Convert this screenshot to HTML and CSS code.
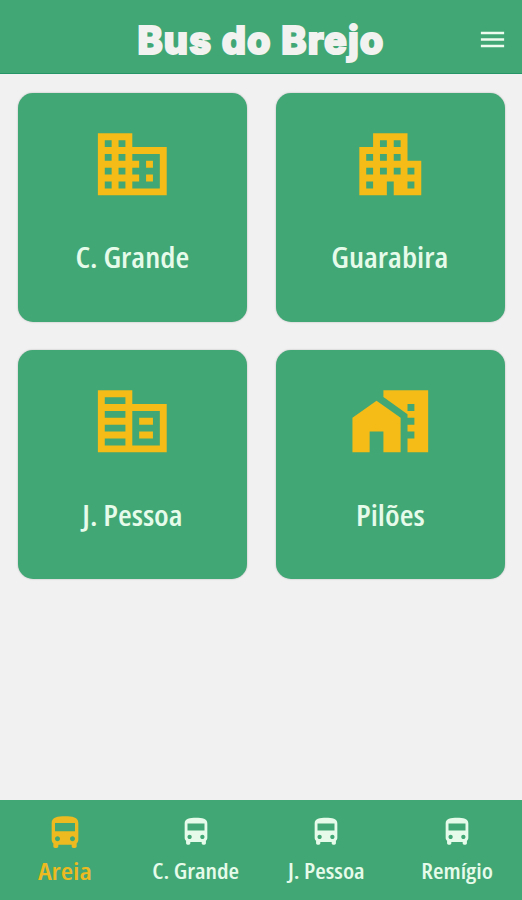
FILE: index.html
```
<!DOCTYPE html>
<html lang="pt-BR">
<head>
    <meta charset="UTF-8">
    <meta name="viewport" content="width=device-width, initial-scale=1.0">
    <title>Bus do Brejo</title>
    <link rel="stylesheet" href="styles.css">
</head>
<body>
    <header class="header">
        <h1 class="title">Bus do Brejo</h1>
        <button class="menu-btn" aria-label="Menu">
            <svg viewBox="0 0 24 24"><path d="M3 18h18v-2H3v2zm0-5h18v-2H3v2zm0-7v2h18V6H3z"/></svg>
        </button>
    </header>

    <main class="cards">
        <a class="card">
            <svg viewBox="0 0 24 24"><path d="M12 7V3H2v18h20V7H12zM6 19H4v-2h2v2zm0-4H4v-2h2v2zm0-4H4V9h2v2zm0-4H4V5h2v2zm4 12H8v-2h2v2zm0-4H8v-2h2v2zm0-4H8V9h2v2zm0-4H8V5h2v2zm10 12h-8v-2h2v-2h-2v-2h2v-2h-2V9h8v10zm-2-8h-2v2h2v-2zm0 4h-2v2h2v-2z"/></svg>
            <span class="label">C. Grande</span>
        </a>
        <a class="card">
            <svg viewBox="0 0 24 24"><path d="M17 11V3H7v4H3v14h8v-4h2v4h8V11h-4zM7 19H5v-2h2v2zm0-4H5v-2h2v2zm0-4H5V9h2v2zm4 4H9v-2h2v2zm0-4H9V9h2v2zm0-4H9V5h2v2zm4 8h-2v-2h2v2zm0-4h-2V9h2v2zm0-4h-2V5h2v2zm4 12h-2v-2h2v2zm0-4h-2v-2h2v2z"/></svg>
            <span class="label">Guarabira</span>
        </a>
        <a class="card">
            <svg viewBox="0 0 24 24"><path d="M12 7V3H2v18h20V7H12zm-2 12H4v-2h6v2zm0-4H4v-2h6v2zm0-4H4V9h6v2zm0-4H4V5h6v2zm10 12h-8V9h8v10zm-2-8h-4v2h4v-2zm0 4h-4v2h4v-2z"/></svg>
            <span class="label">J. Pessoa</span>
        </a>
        <a class="card">
            <svg viewBox="0 0 24 24"><path d="M1 11v10h5v-6h4v6h5V11L8 6z"/><path d="M10 3v1.97l7 5V11h2v2h-2v2h2v2h-2v4h6V3H10zm9 6h-2V7h2v2z"/></svg>
            <span class="label">Pilões</span>
        </a>
    </main>

    <svg class="hidden">
        <symbol id="bus" viewBox="0 0 24 24">
            <path d="M4 16c0 .88.39 1.67 1 2.22V20c0 .55.45 1 1 1h1c.55 0 1-.45 1-1v-1h8v1c0 .55.45 1 1 1h1c.55 0 1-.45 1-1v-1.78c.61-.55 1-1.34 1-2.22V6c0-3.5-3.58-4-8-4s-8 .5-8 4v10zm3.5 1c-.83 0-1.5-.67-1.5-1.5S6.67 14 7.5 14s1.5.67 1.5 1.5S8.33 17 7.5 17zm9 0c-.83 0-1.5-.67-1.5-1.5s.67-1.5 1.5-1.5 1.5.67 1.5 1.5-.67 1.5-1.5 1.5zm1.5-6H6V6h12v5z"/>
        </symbol>
    </svg>

    <nav class="tabs">
        <a class="tab active"><svg><use href="#bus"/></svg><span class="label">Areia</span></a>
        <a class="tab"><svg><use href="#bus"/></svg><span class="label">C. Grande</span></a>
        <a class="tab"><svg><use href="#bus"/></svg><span class="label">J. Pessoa</span></a>
        <a class="tab"><svg><use href="#bus"/></svg><span class="label">Remígio</span></a>
    </nav>
</body>
</html>
```
FILE: styles.css
```
* {
    box-sizing: border-box;
}

body {
    margin: 0;
    height: 100vh;
    display: flex;
    flex-direction: column;
    background: #f1f1f1;
    color: #e6fbea;
    font-family: "Open Sans", sans-serif;
    overflow: hidden;
}

svg {
    display: block;
    fill: currentColor;
}

.hidden {
    display: none;
}

.header {
    height: 74px;
    flex: none;
    display: grid;
    grid-template-columns: 60px 1fr 60px;
    align-items: center;
    background: #41a775;
    border-bottom: 1px solid #259467;
}

.title {
    grid-column: 2;
    margin: 7px 0 0;
    text-align: center;
    font-family: Inter, sans-serif;
    font-size: 38px;
    font-weight: 800;
    line-height: 50px;
    letter-spacing: 1.2px;
    white-space: nowrap;
    color: #f2f3f0;
    -webkit-text-stroke: 2px #f2f3f0;
    stroke-linejoin: round;
}

.menu-btn {
    justify-self: center;
    margin: 5px 0 0;
    padding: 0;
    border: none;
    background: none;
    color: #eefcf0;
}

.menu-btn svg {
    width: 31px;
    height: 31px;
}

.cards {
    flex: 1;
    display: grid;
    grid-template-columns: 229px 229px;
    grid-auto-rows: 229px;
    align-content: start;
    justify-content: center;
    gap: 28.5px;
    padding: 18.5px 0 0 1px;
}

.card {
    display: flex;
    flex-direction: column;
    align-items: center;
    padding-top: 30px;
    border-radius: 15px;
    background: #41a775;
    box-shadow: 0 0 2px rgba(0, 0, 0, 0.25);
}

.card svg {
    width: 82.6px;
    height: 82.6px;
    color: #f5bb17;
}

.label {
    font-stretch: 75%;
    font-weight: 600;
    white-space: nowrap;
    transform: scaleX(1.13);
}

.card .label {
    margin-top: 32px;
    font-size: 28px;
    line-height: 40px;
}

.tabs {
    height: 100px;
    flex: none;
    display: grid;
    grid-template-columns: repeat(4, 1fr);
    background: #41a775;
}

.tab {
    display: flex;
    flex-direction: column;
    align-items: center;
    padding-top: 15px;
}

.tab svg {
    width: 34px;
    height: 34px;
}

.tab .label {
    margin-top: 7px;
    font-size: 21px;
    line-height: 30px;
    transform: scaleX(1.15);
}

.tab.active {
    padding-top: 12.5px;
    color: #edba1f;
}

.tab.active svg {
    width: 40px;
    height: 40px;
}

.tab.active .label {
    margin-top: 2.5px;
    font-size: 24px;
    line-height: 32px;
    transform: scaleX(1.18);
}
```
